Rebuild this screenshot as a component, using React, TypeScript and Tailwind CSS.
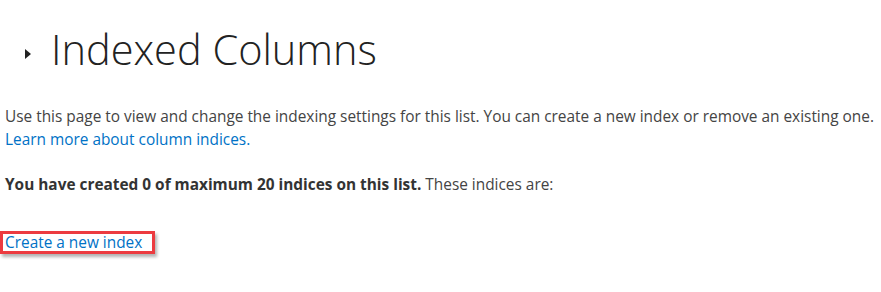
export default function App() {
  return (
    <div className="w-[881px] h-[292px] bg-white relative overflow-hidden" style={{ fontFamily: '"Open Sans", "Noto Sans", sans-serif' }}>
      <div className="flex items-center pt-[22px] pl-[25px]">
        <svg width="7" height="10" viewBox="0 0 7 10" className="mt-[9px]">
          <polygon points="0,0 6,5 0,10" fill="#222" />
        </svg>
        <h1 className="ml-[19px] text-[41.5px] leading-[54px] font-light text-[#222]">Indexed Columns</h1>
      </div>
      <div className="pl-[5px] pt-[29px] text-[15.4px] leading-[23px] text-[#444]">
        <p>Use this page to view and change the indexing settings for this list. You can create a new index or remove an existing one.</p>
        <a className="text-[#0072c6]">Learn more about column indices.</a>
        <p className="mt-[22px]"><span className="font-bold text-[#333]">You have created 0 of maximum 20 indices on this list.</span> These indices are:</p>
        <div className="mt-[35px] -ml-[5px] inline-block border-[3px] border-[#ec3b40] pl-[2px] pr-[10px] shadow-[2px_3px_3px_rgba(0,0,0,0.3)]">
          <a className="text-[#0072c6] block leading-[17px]">Create a new index</a>
        </div>
      </div>
    </div>
  );
}
